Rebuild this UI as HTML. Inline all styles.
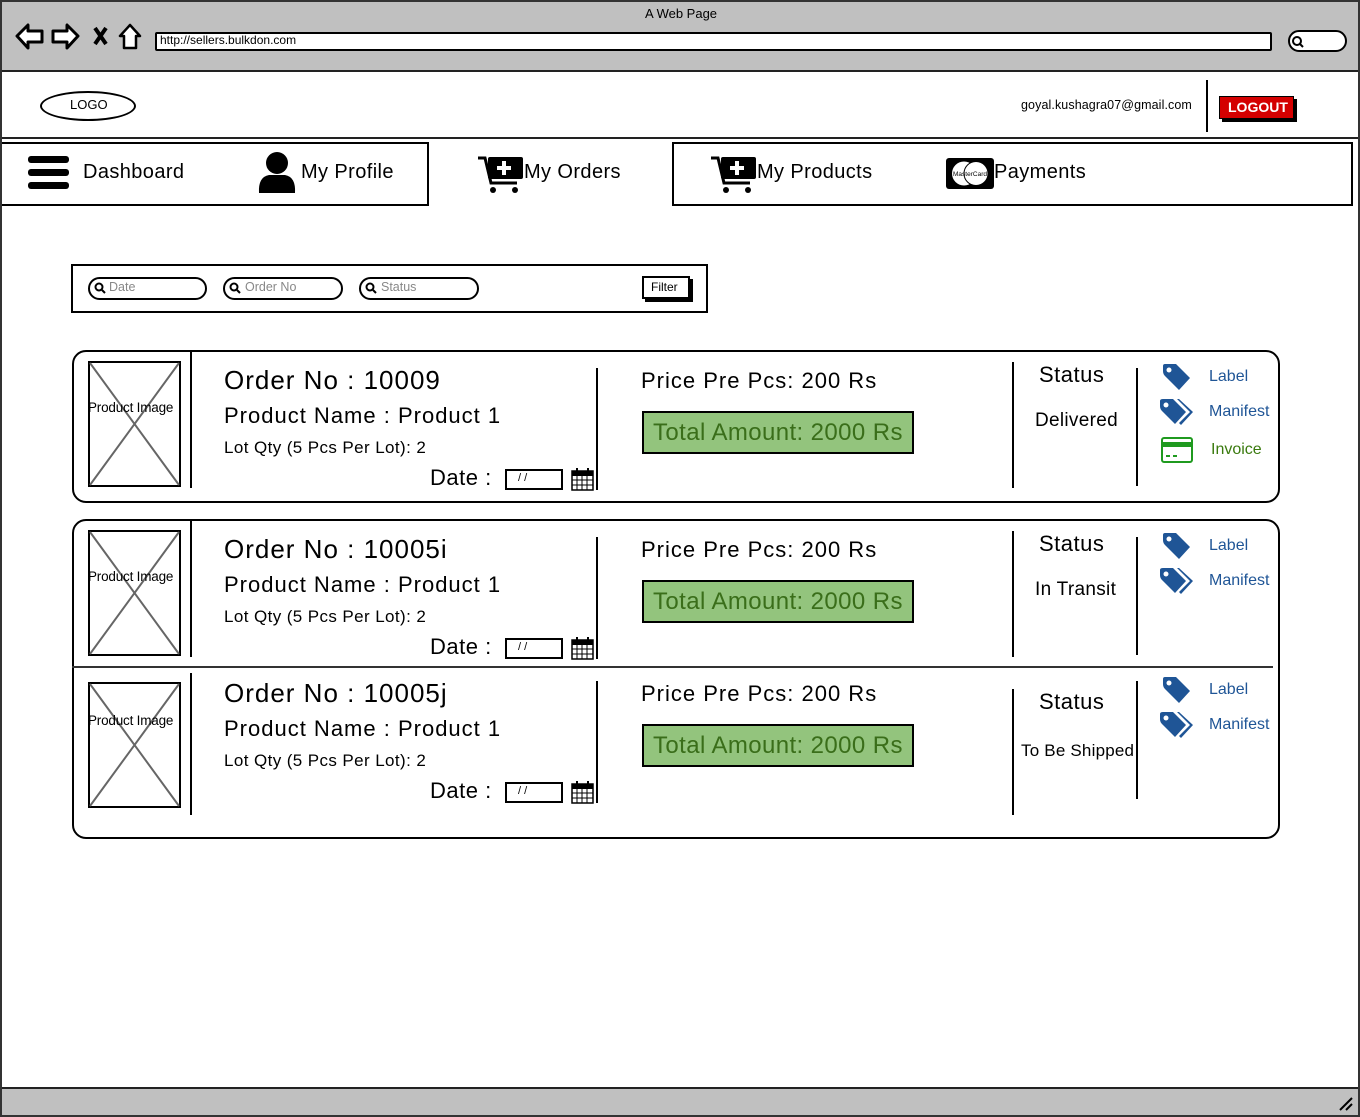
<!DOCTYPE html>
<html><head><meta charset="utf-8"><style>
*{margin:0;padding:0;box-sizing:border-box}
body{width:1360px;height:1117px;position:relative;background:#fff;font-family:"Liberation Sans",sans-serif;color:#000;overflow:hidden}
.a{position:absolute}
.t{position:absolute;white-space:nowrap;line-height:1}
.vl{position:absolute;width:2px;background:#000}
.blue{color:#1f5596}
.on{font-size:26px;letter-spacing:1px}
.pn{font-size:22px;letter-spacing:1px}
.lq{font-size:17px;letter-spacing:0.4px}
.pr{font-size:22px;letter-spacing:1px}
.ta{font-size:24px;letter-spacing:0.4px;color:#3a6e1a}
.nv{font-size:20px;letter-spacing:0.4px}
.dt{font-size:22px;letter-spacing:0.5px}
</style></head><body>
<div class="a" style="left:0;top:0;width:1360px;height:1117px;border:2px solid #333"></div>
<div class="a" style="left:2px;top:2px;width:1356px;height:70px;background:#c0c0c0;border-bottom:2px solid #222"></div>
<div class="t" style="left:645px;top:7px;font-size:13px">A Web Page</div>
<svg class="a" style="left:14px;top:22px" width="130" height="30" viewBox="0 0 130 30">
<path d="M3,14 L14,3 L14,9 L28,9 L28,20 L14,20 L14,26 Z" fill="#fff" stroke="#000" stroke-width="3" stroke-linejoin="round"/>
<path d="M64,14 L53,3 L53,9 L39,9 L39,20 L53,20 L53,26 Z" fill="#fff" stroke="#000" stroke-width="3" stroke-linejoin="round"/>
<path d="M81,6 L92,22 M92,6 L81,22" stroke="#000" stroke-width="4"/>
<path d="M116,3 L106,14 L110,14 L110,26 L122,26 L122,14 L126,14 Z" fill="#fff" stroke="#000" stroke-width="2.5" stroke-linejoin="round"/>
</svg>
<div class="a" style="left:155px;top:32px;width:1117px;height:19px;background:#fff;border:2px solid #000;border-radius:2px"></div>
<div class="t" style="left:160px;top:34px;font-size:12px">http://sellers.bulkdon.com</div>
<div class="a" style="left:1288px;top:30px;width:59px;height:22px;background:#fff;border:2px solid #000;border-radius:11px"></div>
<svg class="a" style="left:1291px;top:35px" width="14" height="14"><circle cx="6" cy="6" r="4" fill="none" stroke="#000" stroke-width="2"/><path d="M9,9 L12,12" stroke="#000" stroke-width="2"/></svg>
<div class="a" style="left:2px;top:137px;width:1356px;height:2px;background:#222"></div>
<div class="a" style="left:40px;top:91px;width:96px;height:30px;border:2px solid #000;border-radius:50%"></div>
<div class="t" style="left:70px;top:98px;font-size:13px">LOGO</div>
<div class="t" style="left:1021px;top:99px;font-size:12.5px;letter-spacing:0.1px">goyal.kushagra07@gmail.com</div>
<div class="vl" style="left:1206px;top:80px;height:52px"></div>
<div class="a" style="left:1222px;top:99px;width:75px;height:23px;background:#000"></div>
<div class="a" style="left:1219px;top:96px;width:75px;height:23px;background:#d40000;border:1px solid #000"></div>
<div class="t" style="left:1228px;top:100px;font-size:14px;color:#fff;font-weight:bold">LOGOUT</div>
<div class="a" style="left:2px;top:142px;width:427px;height:64px;border:2px solid #000;border-left:none"></div>
<div class="a" style="left:672px;top:142px;width:681px;height:64px;border:2px solid #000"></div>
<div class="a" style="left:28px;top:156px;width:41px;height:7px;background:#000;border-radius:3px"></div>
<div class="a" style="left:28px;top:169px;width:41px;height:7px;background:#000;border-radius:3px"></div>
<div class="a" style="left:28px;top:182px;width:41px;height:7px;background:#000;border-radius:3px"></div>
<div class="t nv" style="left:83px;top:162px">Dashboard</div>
<svg class="a" style="left:257px;top:151px" width="40" height="44"><circle cx="20" cy="12" r="11"/><path d="M2,42 Q1,26 12,24 L28,24 Q39,26 38,42 Z"/></svg>
<div class="t nv" style="left:301px;top:162px">My Profile</div>
<svg class="a" style="left:477px;top:155px" width="48" height="40"><path d="M1,3 L8,3 L14,28 L40,28" fill="none" stroke="#000" stroke-width="3"/><rect x="11" y="2" width="35" height="22" rx="2"/><path d="M27,6 L27,20 M20,13 L34,13" stroke="#fff" stroke-width="4"/><circle cx="16" cy="35" r="3"/><circle cx="38" cy="35" r="3"/></svg>
<div class="t nv" style="left:524px;top:162px">My Orders</div>
<svg class="a" style="left:710px;top:155px" width="48" height="40"><path d="M1,3 L8,3 L14,28 L40,28" fill="none" stroke="#000" stroke-width="3"/><rect x="11" y="2" width="35" height="22" rx="2"/><path d="M27,6 L27,20 M20,13 L34,13" stroke="#fff" stroke-width="4"/><circle cx="16" cy="35" r="3"/><circle cx="38" cy="35" r="3"/></svg>
<div class="t nv" style="left:757px;top:162px">My Products</div>
<svg class="a" style="left:946px;top:158px" width="48" height="32"><rect x="0" y="0" width="48" height="31" rx="3"/><circle cx="18" cy="15.5" r="12" fill="#fff"/><circle cx="30" cy="15.5" r="12" fill="#fff" stroke="#000"/><text x="24" y="18" font-size="6.5" text-anchor="middle" font-family="Liberation Sans">MasterCard</text></svg>
<div class="t nv" style="left:994px;top:162px">Payments</div>
<div class="a" style="left:71px;top:264px;width:637px;height:49px;border:2px solid #000"></div>
<div class="a" style="left:88px;top:277px;width:119px;height:23px;border:2px solid #000;border-radius:12px"></div>
<div class="a" style="left:223px;top:277px;width:120px;height:23px;border:2px solid #000;border-radius:12px"></div>
<div class="a" style="left:359px;top:277px;width:120px;height:23px;border:2px solid #000;border-radius:12px"></div>
<svg class="a" style="left:94px;top:282px" width="12" height="12"><circle cx="5" cy="5" r="3.5" fill="none" stroke="#000" stroke-width="2"/><path d="M8,8 L11,11" stroke="#000" stroke-width="2"/></svg>
<svg class="a" style="left:229px;top:282px" width="12" height="12"><circle cx="5" cy="5" r="3.5" fill="none" stroke="#000" stroke-width="2"/><path d="M8,8 L11,11" stroke="#000" stroke-width="2"/></svg>
<svg class="a" style="left:365px;top:282px" width="12" height="12"><circle cx="5" cy="5" r="3.5" fill="none" stroke="#000" stroke-width="2"/><path d="M8,8 L11,11" stroke="#000" stroke-width="2"/></svg>
<div class="t" style="left:109px;top:281px;font-size:12.5px;color:#888">Date</div>
<div class="t" style="left:245px;top:281px;font-size:12.5px;color:#888">Order No</div>
<div class="t" style="left:381px;top:281px;font-size:12.5px;color:#888">Status</div>
<div class="a" style="left:645px;top:279px;width:48px;height:23px;background:#000"></div>
<div class="a" style="left:642px;top:276px;width:48px;height:23px;background:#fff;border:2px solid #000"></div>
<div class="t" style="left:651px;top:281px;font-size:12px">Filter</div>
<div class="a" style="left:72px;top:350px;width:1208px;height:153px;border:2px solid #000;border-radius:14px"></div>
<div class="a" style="left:72px;top:519px;width:1208px;height:320px;border:2px solid #000;border-radius:14px"></div>
<div class="a" style="left:72px;top:666px;width:1201px;height:2px;background:#333"></div>

<div class="a" style="left:0;top:350px;width:1360px;height:150px">
<svg class="a" style="left:88px;top:11px" width="93" height="126"><rect x="1" y="1" width="91" height="124" fill="#fff" stroke="#000" stroke-width="2"/><path d="M2,2 L91,124 M91,2 L2,124" stroke="#666" stroke-width="2"/></svg>
<div class="t" style="left:88px;top:51px;font-size:13.5px;letter-spacing:-0.2px">Product Image</div>
<div class="vl" style="left:190px;top:2px;height:136px"></div>
<div class="t on" style="left:224px;top:17px">Order No : 10009</div>
<div class="t pn" style="left:224px;top:55px">Product Name : Product 1</div>
<div class="t lq" style="left:224px;top:89px">Lot Qty (5 Pcs Per Lot): 2</div>
<div class="t dt" style="left:430px;top:117px">Date :</div>
<div class="a" style="left:505px;top:119px;width:58px;height:21px;border:2px solid #000"></div>
<div class="t" style="left:518px;top:123px;font-size:11px">/ /</div>
<svg class="a" style="left:571px;top:117px" width="23" height="24"><rect x="1" y="4" width="21" height="19" fill="#fff" stroke="#000" stroke-width="1.5"/><rect x="1" y="4" width="21" height="5"/><path d="M6,1 L6,6 M17,1 L17,6" stroke="#000" stroke-width="2"/><path d="M6,9 L6,23 M11,9 L11,23 M16,9 L16,23 M1,13 L22,13 M1,18 L22,18" stroke="#000" stroke-width="1"/></svg>
<div class="vl" style="left:596px;top:18px;height:122px"></div>
<div class="t pr" style="left:641px;top:20px">Price Pre Pcs: 200 Rs</div>
<div class="a" style="left:642px;top:61px;width:272px;height:43px;background:#93c47d;border:2px solid #000"></div>
<div class="t ta" style="left:653px;top:71px">Total Amount: 2000 Rs</div>
<div class="vl" style="left:1012px;top:12px;height:126px"></div>
<div class="vl" style="left:1136px;top:18px;height:118px"></div>
<div class="t" style="left:1039px;top:14px;font-size:22px;letter-spacing:0.5px">Status</div>
<div class="t" style="left:1035px;top:61px;font-size:19px;letter-spacing:0.3px">Delivered</div>
<svg class="a" style="left:1162px;top:13px" width="30" height="28"><path d="M3,1 L14,1 L28,15 L17,27 L3,13 Q1,11 1,8 L1,3 Q1,1 3,1Z" fill="#1f5596"/><circle cx="7" cy="7" r="2.5" fill="#fff"/></svg>
<div class="t blue" style="left:1209px;top:19px;font-size:16px">Label</div>
<svg class="a" style="left:1160px;top:48px" width="34" height="28"><path d="M3,1 L13,1 L26,14 L15,26 L2,13 Q0,11 0,8 L0,3 Q0,1 3,1Z" fill="#1f5596"/><circle cx="6" cy="7" r="2.5" fill="#fff"/><path d="M17,1 L19,1 L33,14 L21,27 L19,25 L30,14Z" fill="#1f5596"/></svg>
<div class="t blue" style="left:1209px;top:54px;font-size:16px">Manifest</div>
<svg class="a" style="left:1161px;top:87px" width="32" height="26"><rect x="1" y="1" width="30" height="24" rx="2" fill="#fff" stroke="#1f9a1f" stroke-width="2"/><rect x="1" y="5" width="30" height="5" fill="#1f9a1f"/><path d="M5,19 L9,19 M12,19 L16,19" stroke="#1f9a1f" stroke-width="2"/></svg>
<div class="t" style="left:1211px;top:92px;font-size:16px;color:#3a7a0e">Invoice</div>
</div>

<div class="a" style="left:0;top:519px;width:1360px;height:150px">
<svg class="a" style="left:88px;top:11px" width="93" height="126"><rect x="1" y="1" width="91" height="124" fill="#fff" stroke="#000" stroke-width="2"/><path d="M2,2 L91,124 M91,2 L2,124" stroke="#666" stroke-width="2"/></svg>
<div class="t" style="left:88px;top:51px;font-size:13.5px;letter-spacing:-0.2px">Product Image</div>
<div class="vl" style="left:190px;top:2px;height:136px"></div>
<div class="t on" style="left:224px;top:17px">Order No : 10005i</div>
<div class="t pn" style="left:224px;top:55px">Product Name : Product 1</div>
<div class="t lq" style="left:224px;top:89px">Lot Qty (5 Pcs Per Lot): 2</div>
<div class="t dt" style="left:430px;top:117px">Date :</div>
<div class="a" style="left:505px;top:119px;width:58px;height:21px;border:2px solid #000"></div>
<div class="t" style="left:518px;top:123px;font-size:11px">/ /</div>
<svg class="a" style="left:571px;top:117px" width="23" height="24"><rect x="1" y="4" width="21" height="19" fill="#fff" stroke="#000" stroke-width="1.5"/><rect x="1" y="4" width="21" height="5"/><path d="M6,1 L6,6 M17,1 L17,6" stroke="#000" stroke-width="2"/><path d="M6,9 L6,23 M11,9 L11,23 M16,9 L16,23 M1,13 L22,13 M1,18 L22,18" stroke="#000" stroke-width="1"/></svg>
<div class="vl" style="left:596px;top:18px;height:122px"></div>
<div class="t pr" style="left:641px;top:20px">Price Pre Pcs: 200 Rs</div>
<div class="a" style="left:642px;top:61px;width:272px;height:43px;background:#93c47d;border:2px solid #000"></div>
<div class="t ta" style="left:653px;top:71px">Total Amount: 2000 Rs</div>
<div class="vl" style="left:1012px;top:12px;height:126px"></div>
<div class="vl" style="left:1136px;top:18px;height:118px"></div>
<div class="t" style="left:1039px;top:14px;font-size:22px;letter-spacing:0.5px">Status</div>
<div class="t" style="left:1035px;top:61px;font-size:19px;letter-spacing:0.3px">In Transit</div>
<svg class="a" style="left:1162px;top:13px" width="30" height="28"><path d="M3,1 L14,1 L28,15 L17,27 L3,13 Q1,11 1,8 L1,3 Q1,1 3,1Z" fill="#1f5596"/><circle cx="7" cy="7" r="2.5" fill="#fff"/></svg>
<div class="t blue" style="left:1209px;top:19px;font-size:16px">Label</div>
<svg class="a" style="left:1160px;top:48px" width="34" height="28"><path d="M3,1 L13,1 L26,14 L15,26 L2,13 Q0,11 0,8 L0,3 Q0,1 3,1Z" fill="#1f5596"/><circle cx="6" cy="7" r="2.5" fill="#fff"/><path d="M17,1 L19,1 L33,14 L21,27 L19,25 L30,14Z" fill="#1f5596"/></svg>
<div class="t blue" style="left:1209px;top:54px;font-size:16px">Manifest</div>
</div>

<div class="a" style="left:0;top:663px;width:1360px;height:160px">
<svg class="a" style="left:88px;top:19px" width="93" height="126"><rect x="1" y="1" width="91" height="124" fill="#fff" stroke="#000" stroke-width="2"/><path d="M2,2 L91,124 M91,2 L2,124" stroke="#666" stroke-width="2"/></svg>
<div class="t" style="left:88px;top:51px;font-size:13.5px;letter-spacing:-0.2px">Product Image</div>
<div class="vl" style="left:190px;top:10px;height:142px"></div>
<div class="t on" style="left:224px;top:17px">Order No : 10005j</div>
<div class="t pn" style="left:224px;top:55px">Product Name : Product 1</div>
<div class="t lq" style="left:224px;top:89px">Lot Qty (5 Pcs Per Lot): 2</div>
<div class="t dt" style="left:430px;top:117px">Date :</div>
<div class="a" style="left:505px;top:119px;width:58px;height:21px;border:2px solid #000"></div>
<div class="t" style="left:518px;top:123px;font-size:11px">/ /</div>
<svg class="a" style="left:571px;top:117px" width="23" height="24"><rect x="1" y="4" width="21" height="19" fill="#fff" stroke="#000" stroke-width="1.5"/><rect x="1" y="4" width="21" height="5"/><path d="M6,1 L6,6 M17,1 L17,6" stroke="#000" stroke-width="2"/><path d="M6,9 L6,23 M11,9 L11,23 M16,9 L16,23 M1,13 L22,13 M1,18 L22,18" stroke="#000" stroke-width="1"/></svg>
<div class="vl" style="left:596px;top:18px;height:122px"></div>
<div class="t pr" style="left:641px;top:20px">Price Pre Pcs: 200 Rs</div>
<div class="a" style="left:642px;top:61px;width:272px;height:43px;background:#93c47d;border:2px solid #000"></div>
<div class="t ta" style="left:653px;top:71px">Total Amount: 2000 Rs</div>
<div class="vl" style="left:1012px;top:26px;height:126px"></div>
<div class="vl" style="left:1136px;top:18px;height:118px"></div>
<div class="t" style="left:1039px;top:28px;font-size:22px;letter-spacing:0.5px">Status</div>
<div class="t" style="left:1021px;top:79px;font-size:17px;letter-spacing:0.2px">To Be Shipped</div>
<svg class="a" style="left:1162px;top:13px" width="30" height="28"><path d="M3,1 L14,1 L28,15 L17,27 L3,13 Q1,11 1,8 L1,3 Q1,1 3,1Z" fill="#1f5596"/><circle cx="7" cy="7" r="2.5" fill="#fff"/></svg>
<div class="t blue" style="left:1209px;top:19px;font-size:16px">Label</div>
<svg class="a" style="left:1160px;top:48px" width="34" height="28"><path d="M3,1 L13,1 L26,14 L15,26 L2,13 Q0,11 0,8 L0,3 Q0,1 3,1Z" fill="#1f5596"/><circle cx="6" cy="7" r="2.5" fill="#fff"/><path d="M17,1 L19,1 L33,14 L21,27 L19,25 L30,14Z" fill="#1f5596"/></svg>
<div class="t blue" style="left:1209px;top:54px;font-size:16px">Manifest</div>
</div>

<div class="a" style="left:2px;top:1087px;width:1356px;height:28px;background:#c0c0c0;border-top:2px solid #222"></div>
<svg class="a" style="left:1338px;top:1096px" width="16" height="16"><path d="M2,14 L14,2 M8,14 L14,8" stroke="#000" stroke-width="2"/></svg>
</body></html>
